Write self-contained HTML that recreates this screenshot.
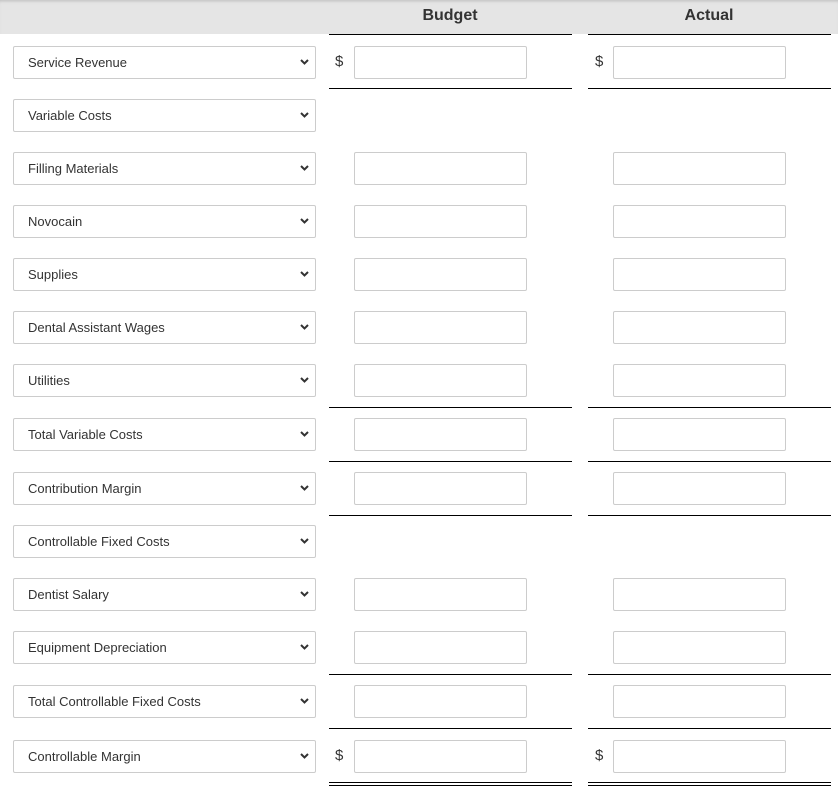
<!DOCTYPE html>
<html><head><style>
*{margin:0;padding:0;box-sizing:border-box}
body{width:838px;height:795px;background:#fff;font-family:"Liberation Sans",sans-serif;position:relative;overflow:hidden}
.hdr{position:absolute;left:0;top:0;width:838px;height:34px;background:#e5e5e5;box-shadow:inset 0 3px 3px -2px #bbb}
.ht{position:absolute;top:7px;font-weight:bold;font-size:16px;color:#333;width:242px;text-align:center}
.sel{position:absolute;left:13px;width:303px;height:33px;border:1px solid #ccc;border-radius:2px;font-size:13px;color:#333;padding-left:14px;line-height:32px}
.sel svg{position:absolute;right:6px;top:12px}
.in{position:absolute;width:173px;height:33px;border:1px solid #ccc;border-radius:2px}
.ln{position:absolute;height:1px;background:#000;width:243px}
.d{position:absolute;font-size:15px;color:#333}
</style></head><body>
<div class="hdr"></div>
<div class="ht" style="left:329px">Budget</div>
<div class="ht" style="left:588px">Actual</div>
<div class="ln" style="left:329px;top:34px"></div><div class="ln" style="left:588px;top:34px"></div>
<div id="c"></div>
<script>
var rows=[["Service Revenue",46,1,1],["Variable Costs",99,0,0],["Filling Materials",152,1,0],["Novocain",205,1,0],["Supplies",258,1,0],["Dental Assistant Wages",311,1,0],["Utilities",364,1,0],["Total Variable Costs",418,1,0],["Contribution Margin",472,1,0],["Controllable Fixed Costs",525,0,0],["Dentist Salary",578,1,0],["Equipment Depreciation",631,1,0],["Total Controllable Fixed Costs",685,1,0],["Controllable Margin",740,1,1]];
var h="";
rows.forEach(function(r){
h+='<div class="sel" style="top:'+r[1]+'px">'+r[0]+'<svg width="9" height="6" viewBox="0 0 9 6"><path d="M1 1l3.5 3.5L8 1" stroke="#333" stroke-width="2" fill="none"/></svg></div>';
if(r[2]){h+='<div class="in" style="left:354px;top:'+r[1]+'px"></div><div class="in" style="left:613px;top:'+r[1]+'px"></div>';}
if(r[3]){h+='<div class="d" style="left:335px;top:'+(r[1]+7)+'px">$</div><div class="d" style="left:595px;top:'+(r[1]+7)+'px">$</div>';}
});
[88,407,461,515,674,728,782,785].forEach(function(y){h+='<div class="ln" style="left:329px;top:'+y+'px"></div><div class="ln" style="left:588px;top:'+y+'px"></div>';});
document.getElementById("c").innerHTML=h;
</script>
</body></html>
